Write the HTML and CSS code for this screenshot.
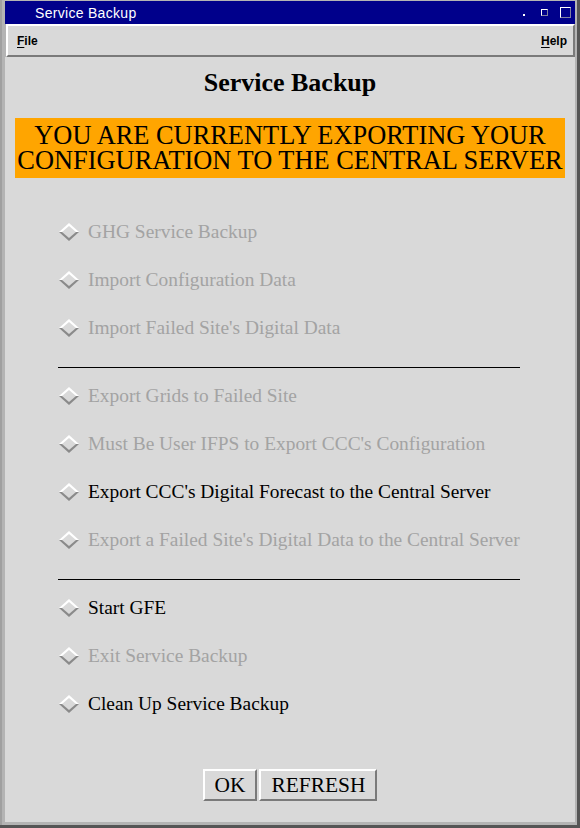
FILE: index.html
```html
<!DOCTYPE html>
<html>
<head>
<meta charset="utf-8">
<link rel="stylesheet" href="styles.css">
</head>
<body>
<div class="frame">
  <div class="titlebar">
    <span class="title">Service Backup</span>
    <div class="wm-buttons">
      <span class="wm-min"></span>
      <span class="wm-small"></span>
      <span class="wm-max"></span>
    </div>
  </div>
  <div class="menubar">
    <span class="menu"><u>F</u>ile</span>
    <span class="menu"><u>H</u>elp</span>
  </div>
  <div class="content">
    <h1 class="heading">Service Backup</h1>
    <div class="banner"><div class="bline">YOU ARE CURRENTLY EXPORTING YOUR</div><div class="bline">CONFIGURATION TO THE CENTRAL SERVER</div></div>
    <div class="options">
      <div class="opt disabled"><svg class="dia" viewBox="0 0 20 18" width="20" height="18"><polygon points="10,0 20,9 0,9" fill="#ffffff"/><polygon points="0,9 20,9 10,18" fill="#8a8a8a"/><polygon points="10,3 17,9 10,15 3,9" fill="#d9d9d9"/></svg><span>GHG Service Backup</span></div>
      <div class="opt disabled"><svg class="dia" viewBox="0 0 20 18" width="20" height="18"><polygon points="10,0 20,9 0,9" fill="#ffffff"/><polygon points="0,9 20,9 10,18" fill="#8a8a8a"/><polygon points="10,3 17,9 10,15 3,9" fill="#d9d9d9"/></svg><span>Import Configuration Data</span></div>
      <div class="opt disabled"><svg class="dia" viewBox="0 0 20 18" width="20" height="18"><polygon points="10,0 20,9 0,9" fill="#ffffff"/><polygon points="0,9 20,9 10,18" fill="#8a8a8a"/><polygon points="10,3 17,9 10,15 3,9" fill="#d9d9d9"/></svg><span>Import Failed Site's Digital Data</span></div>
      <div class="sep"></div>
      <div class="opt disabled"><svg class="dia" viewBox="0 0 20 18" width="20" height="18"><polygon points="10,0 20,9 0,9" fill="#ffffff"/><polygon points="0,9 20,9 10,18" fill="#8a8a8a"/><polygon points="10,3 17,9 10,15 3,9" fill="#d9d9d9"/></svg><span>Export Grids to Failed Site</span></div>
      <div class="opt disabled"><svg class="dia" viewBox="0 0 20 18" width="20" height="18"><polygon points="10,0 20,9 0,9" fill="#ffffff"/><polygon points="0,9 20,9 10,18" fill="#8a8a8a"/><polygon points="10,3 17,9 10,15 3,9" fill="#d9d9d9"/></svg><span>Must Be User IFPS to Export CCC's Configuration</span></div>
      <div class="opt"><svg class="dia" viewBox="0 0 20 18" width="20" height="18"><polygon points="10,0 20,9 0,9" fill="#ffffff"/><polygon points="0,9 20,9 10,18" fill="#8a8a8a"/><polygon points="10,3 17,9 10,15 3,9" fill="#d9d9d9"/></svg><span>Export CCC's Digital Forecast to the Central Server</span></div>
      <div class="opt disabled"><svg class="dia" viewBox="0 0 20 18" width="20" height="18"><polygon points="10,0 20,9 0,9" fill="#ffffff"/><polygon points="0,9 20,9 10,18" fill="#8a8a8a"/><polygon points="10,3 17,9 10,15 3,9" fill="#d9d9d9"/></svg><span>Export a Failed Site's Digital Data to the Central Server</span></div>
      <div class="sep"></div>
      <div class="opt"><svg class="dia" viewBox="0 0 20 18" width="20" height="18"><polygon points="10,0 20,9 0,9" fill="#ffffff"/><polygon points="0,9 20,9 10,18" fill="#8a8a8a"/><polygon points="10,3 17,9 10,15 3,9" fill="#d9d9d9"/></svg><span>Start GFE</span></div>
      <div class="opt disabled"><svg class="dia" viewBox="0 0 20 18" width="20" height="18"><polygon points="10,0 20,9 0,9" fill="#ffffff"/><polygon points="0,9 20,9 10,18" fill="#8a8a8a"/><polygon points="10,3 17,9 10,15 3,9" fill="#d9d9d9"/></svg><span>Exit Service Backup</span></div>
      <div class="opt"><svg class="dia" viewBox="0 0 20 18" width="20" height="18"><polygon points="10,0 20,9 0,9" fill="#ffffff"/><polygon points="0,9 20,9 10,18" fill="#8a8a8a"/><polygon points="10,3 17,9 10,15 3,9" fill="#d9d9d9"/></svg><span>Clean Up Service Backup</span></div>
    </div>
    <div class="buttons">
      <button class="btn">OK</button>
      <button class="btn">REFRESH</button>
    </div>
  </div>
</div>
</body>
</html>
```

FILE: styles.css
```css
html, body {
  margin: 0;
  padding: 0;
  background: #b4b4b4;
}
.frame {
  width: 580px;
  height: 828px;
  box-sizing: border-box;
  padding: 1px 5px 6px 5px;
  background: #b4b4b4;
  box-shadow: inset -3px -3px 0 #555555, inset 2px 0 0 #a0a0a0;
  display: flex;
  flex-direction: column;
}
.titlebar {
  height: 23px;
  background: #00008b;
  display: flex;
  align-items: center;
  justify-content: space-between;
  padding: 0 4px 0 30px;
  flex: none;
}
.title {
  font-family: "Liberation Sans", Arial, sans-serif;
  font-size: 14px;
  letter-spacing: 0.3px;
  color: #ffffff;
}
.wm-buttons {
  display: flex;
  align-items: center;
}
.wm-min {
  width: 2px;
  height: 2px;
  background: #ffffff;
  margin-right: 16px;
  margin-top: 4px;
}
.wm-small {
  width: 5px;
  height: 5px;
  border: 1px solid #ffffff;
  border-right-color: #8080a0;
  border-bottom-color: #8080a0;
  margin-right: 12px;
}
.wm-max {
  width: 9px;
  height: 9px;
  border: 1px solid #ffffff;
  border-right-color: #8080a0;
  border-bottom-color: #8080a0;
}
.menubar {
  flex: none;
  height: 29px;
  background: #d9d9d9;
  border-top: 2px solid #ffffff;
  border-left: 2px solid #ffffff;
  border-bottom: 2px solid #7a7a7a;
  border-right: 2px solid #7a7a7a;
  margin: 0 0 0 1px;
  display: flex;
  align-items: center;
  justify-content: space-between;
  padding: 0 6px 0 9px;
}
.menu {
  font-family: "Liberation Sans", Arial, sans-serif;
  font-size: 12px;
  font-weight: bold;
  color: #000000;
}
.menu u {
  text-underline-offset: 2px;
}
.content {
  flex: 1;
  background: #d9d9d9;
  display: flex;
  flex-direction: column;
}
.heading {
  margin: 10px 0 0 0;
  font-family: "Liberation Serif", "Times New Roman", serif;
  font-size: 26px;
  font-weight: bold;
  line-height: 31px;
  text-align: center;
  color: #000000;
}
.banner {
  margin: 20px 10px 0 10px;
  height: 60px;
  box-sizing: border-box;
  padding-top: 5px;
  background: #ffa500;
  font-family: "Liberation Serif", "Times New Roman", serif;
  font-size: 26.4px;
  text-align: center;
  color: #000000;
  white-space: nowrap;
}
.bline {
  height: 25px;
  line-height: 24px;
}
.options {
  margin: 30px 55px 0 53px;
  display: flex;
  flex-direction: column;
}
.opt {
  height: 48px;
  display: flex;
  align-items: center;
  font-family: "Liberation Serif", "Times New Roman", serif;
  font-size: 19.4px;
  color: #000000;
  white-space: nowrap;
}
.opt.disabled {
  color: #a3a3a3;
}
.dia {
  flex: none;
  margin: 0 9px 0 1px;
}
.sep {
  height: 1px;
  background: #000000;
  margin: 15px 0 4px 0;
}
.buttons {
  margin-top: 41px;
  display: flex;
  justify-content: center;
  gap: 2px;
}
.btn {
  height: 32px;
  box-sizing: border-box;
  padding: 0 10px;
  background: #d9d9d9;
  border-top: 2px solid #ffffff;
  border-left: 2px solid #ffffff;
  border-bottom: 2px solid #7a7a7a;
  border-right: 2px solid #7a7a7a;
  font-family: "Liberation Serif", "Times New Roman", serif;
  font-size: 21.4px;
  color: #000000;
  line-height: 26px;
}
```
